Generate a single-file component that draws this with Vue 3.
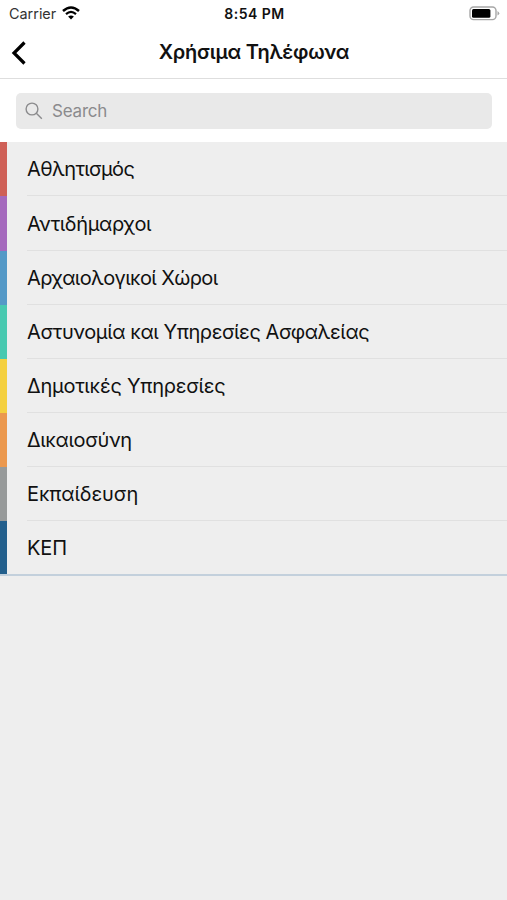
<template>
  <main class="screen">
    <header class="top">
      <div class="status-bar">
        <div class="carrier">
          <span>Carrier</span>
          <svg class="wifi" viewBox="0 0 18 14" fill="none" stroke="#000">
            <path d="M1 5Q9 -2 17 5" stroke-width="2.5" />
            <path d="M4 8.1Q9 3.7 14 8.1" stroke-width="2.2" />
            <path d="M9 13.4L6.1 10.6Q9 8.3 11.9 10.6Z" fill="#000" stroke="none" />
          </svg>
        </div>
        <time class="clock">8:54 PM</time>
        <svg class="battery" viewBox="0 0 31 15">
          <rect x="1" y="1" width="26" height="12.6" rx="3.6" fill="#fff" stroke="#a6a6a6" stroke-width="1.4" />
          <rect x="3" y="3" width="18.4" height="8.7" rx="1.5" fill="#000" />
          <path d="M28.5 5Q32 7.3 28.5 9.6Z" fill="#a6a6a6" />
        </svg>
      </div>
      <div class="nav-bar">
        <button class="back" aria-label="Back">
          <svg viewBox="0 0 16 24" fill="none" stroke="#000" stroke-width="3.2">
            <path d="M13.5 1.5L3 12L13.5 22.5" />
          </svg>
        </button>
        <h1 class="title">Χρήσιμα Τηλέφωνα</h1>
      </div>
    </header>

    <div class="search-wrap">
      <label class="search">
        <svg viewBox="0 0 18 18" fill="none" stroke="#8b8b8d" stroke-width="1.4">
          <circle cx="7" cy="7" r="5.9" />
          <path d="M11.3 11.3L16.8 16.8" />
        </svg>
        <input v-model="query" placeholder="Search" />
      </label>
    </div>

    <ul class="list">
      <li v-for="item in filtered" :key="item.name" class="row" :class="item.color">
        <span class="label" :style="{ letterSpacing: item.tracking + 'px' }">{{ item.name }}</span>
      </li>
    </ul>
  </main>
</template>

<script setup>
import { computed, ref } from 'vue';

const query = ref('');

const categories = [
  { name: 'Αθλητισμός', color: 'red', tracking: -0.6 },
  { name: 'Αντιδήμαρχοι', color: 'purple', tracking: -0.36 },
  { name: 'Αρχαιολογικοί Χώροι', color: 'blue', tracking: -0.63 },
  { name: 'Αστυνομία και Υπηρεσίες Ασφαλείας', color: 'teal', tracking: -0.42 },
  { name: 'Δημοτικές Υπηρεσίες', color: 'yellow', tracking: -0.23 },
  { name: 'Δικαιοσύνη', color: 'orange', tracking: -0.38 },
  { name: 'Εκπαίδευση', color: 'gray', tracking: -0.08 },
  { name: 'ΚΕΠ', color: 'navy', tracking: -0.1 }
];

const filtered = computed(() => {
  const q = query.value.trim().toLowerCase();
  return categories.filter((c) => c.name.toLowerCase().includes(q));
});
</script>

<style>
body { margin: 0; background: #eee; }
</style>

<style scoped>
.screen {
  min-height: 100vh;
  background: #eee;
  color: #111;
  font-family: Inter, "Noto Sans", sans-serif;
}
.top {
  box-sizing: border-box;
  height: 79px;
  background: #fff;
  border-bottom: 1px solid #dedede;
}
.status-bar {
  display: grid;
  grid-template-columns: 1fr auto 1fr;
  align-items: center;
  height: 27px;
  padding: 0 7px 0 9px;
}
.carrier {
  display: flex;
  align-items: center;
  gap: 6px;
  font-size: 14.4px;
  color: #333;
}
.wifi { width: 18px; height: 14px; margin-top: -2px; }
.clock { font-size: 14px; font-weight: 600; letter-spacing: 0.5px; }
.battery { width: 31px; height: 15px; justify-self: end; }
.nav-bar {
  display: grid;
  grid-template-columns: 48px 1fr 47px;
  align-items: center;
  height: 51px;
}
.back {
  display: flex;
  padding: 0 0 0 11px;
  border: 0;
  background: none;
  cursor: pointer;
}
.back svg { width: 16px; height: 24px; }
.title {
  margin: 0;
  padding-bottom: 2px;
  text-align: center;
  font-size: 20px;
  font-weight: 600;
  letter-spacing: -0.25px;
  white-space: nowrap;
}
.search-wrap {
  box-sizing: border-box;
  height: 63.4px;
  padding: 14px 15px 13px 15.5px;
  background: #fff;
}
.search {
  display: flex;
  align-items: center;
  gap: 9px;
  box-sizing: border-box;
  height: 36px;
  padding: 0 10px 0 9.5px;
  border-radius: 5px;
  background: #e9e9e9;
}
.search svg { flex: none; width: 18px; height: 18px; }
.search input {
  flex: 1;
  min-width: 0;
  padding: 0;
  border: 0;
  outline: 0;
  background: none;
  font: inherit;
  font-size: 17px;
  letter-spacing: -0.2px;
}
.search input::placeholder { color: #8b8b8d; opacity: 1; }
.list {
  margin: 0;
  padding: 0;
  list-style: none;
  border-bottom: 2px solid #c3d0dc;
}
.row {
  display: flex;
  box-sizing: border-box;
  height: 54.1px;
  padding-left: 20px;
  border-left: 7px solid;
}
.label {
  flex: 1;
  display: flex;
  align-items: center;
  padding-top: 1px;
  border-bottom: 1px solid #e0e0e0;
  font-size: 20px;
  white-space: nowrap;
}
.row:last-child { height: 53.1px; }
.row:last-child .label { border-bottom: 0; }
.red { border-left-color: #cf6057; }
.purple { border-left-color: #a569bd; }
.blue { border-left-color: #5499c7; }
.teal { border-left-color: #48c9b0; }
.yellow { border-left-color: #f4d03f; }
.orange { border-left-color: #eb984e; }
.gray { border-left-color: #979a9a; }
.navy { border-left-color: #235f8c; }
</style>
